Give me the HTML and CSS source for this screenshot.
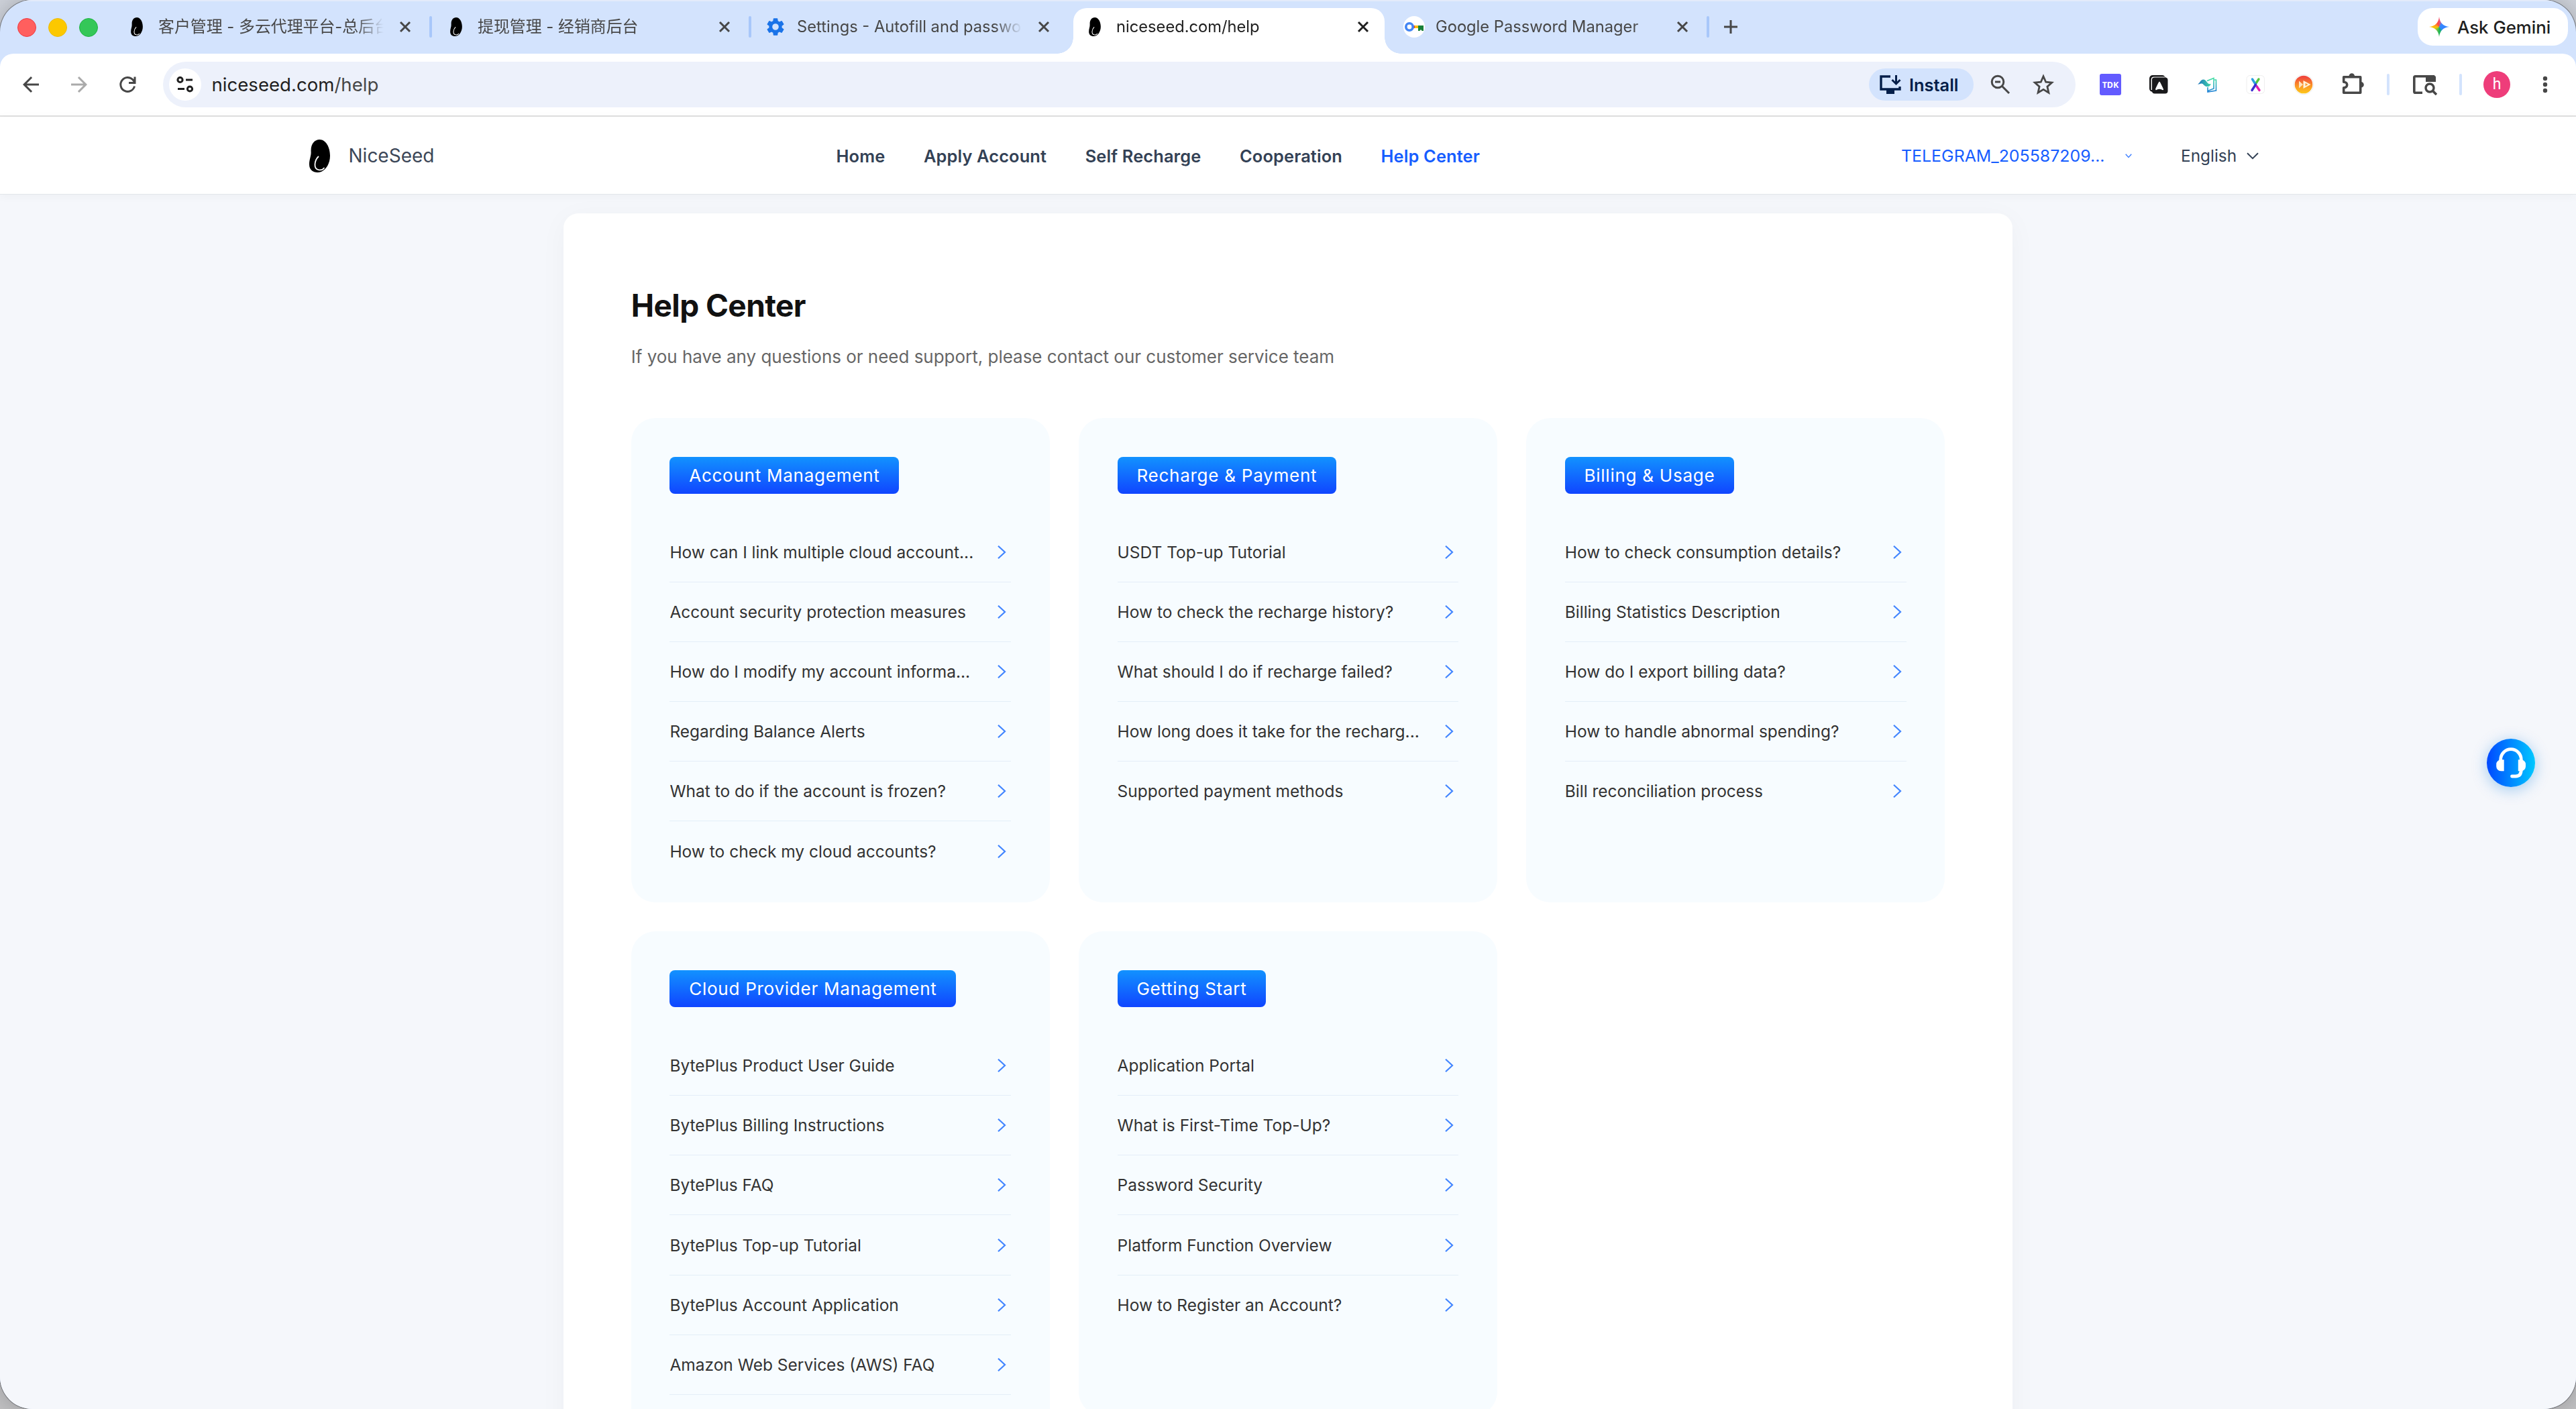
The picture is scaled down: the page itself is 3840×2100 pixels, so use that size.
FILE: index.html
```html
<!DOCTYPE html>
<html lang="en">
<head>
<meta charset="utf-8">
<title>niceseed.com/help</title>
<link rel="stylesheet" href="styles.css">
</head>
<body>
<svg class="defs" aria-hidden="true">
  <symbol id="seed" viewBox="0 0 31 49">
    <path d="M15.500 0C24.500 0 31 11 31 24c0 14-8.500 25-18.500 25C4.500 49 0 44 0 37c0-8 3-12 2.600-19C2 7 7.500 0 15.500 0z"/>
    <path d="M13.500 25.500C8 31 5.500 43.500 14 45.200c3.500.6 6.500-.7 8-2.700" fill="none" stroke="#fff" stroke-width="1.800" stroke-linecap="round"/>
  </symbol>
  <symbol id="close" viewBox="0 0 32 32"><path d="M9 9l14 14M23 9L9 23" fill="none" stroke="currentColor" stroke-width="3"/></symbol>
  <symbol id="chev" viewBox="0 0 26 26"><path d="M7 3.800L17 13 7 22.200" fill="none" stroke="#4285ff" stroke-width="2.200"/></symbol>
</svg>

<div class="window">
  <div class="tabstrip">
    <div class="lights"><i class="red"></i><i class="yellow"></i><i class="green"></i></div>
    <div class="tab sep">
      <span class="fav"><svg class="seed-s"><use href="#seed"/></svg></span>
      <span class="label cjk">客户管理 - 多云代理平台-总后台</span>
      <svg class="x"><use href="#close"/></svg>
    </div>
    <div class="tab sep">
      <span class="fav"><svg class="seed-s"><use href="#seed"/></svg></span>
      <span class="label cjk">提现管理 - 经销商后台</span>
      <svg class="x"><use href="#close"/></svg>
    </div>
    <div class="tab">
      <span class="fav"><svg width="32" height="32" viewBox="0 0 24 24"><path fill="#1a73e8" d="M19.140 12.940c.04-.3.06-.61.06-.94s-.02-.64-.07-.94l2.030-1.580a.49.49 0 0 0 .12-.61l-1.920-3.320a.488.488 0 0 0-.59-.22l-2.390.96c-.5-.38-1.030-.7-1.620-.94L14.400 2.810a.484.484 0 0 0-.48-.41h-3.840c-.24 0-.43.17-.47.41l-.36 2.540c-.59.24-1.130.57-1.620.94l-2.390-.96a.48.48 0 0 0-.59.22L2.740 8.870c-.12.21-.08.47.12.61l2.030 1.580c-.05.3-.09.63-.09.94s.02.64.07.94l-2.030 1.580a.49.49 0 0 0-.12.61l1.920 3.320c.12.22.37.29.59.22l2.390-.96c.5.38 1.030.7 1.620.94l.36 2.540c.05.24.24.41.48.41h3.840c.24 0 .44-.17.47-.41l.36-2.540c.59-.24 1.130-.56 1.620-.94l2.390.96c.22.08.47 0 .59-.22l1.920-3.320a.48.48 0 0 0-.12-.61l-2.010-1.580zM12 15.600a3.600 3.600 0 1 1 0-7.200 3.600 3.600 0 0 1 0 7.200z"/></svg></span>
      <span class="label">Settings - Autofill and passwords</span>
      <svg class="x"><use href="#close"/></svg>
    </div>
    <div class="tab active">
      <span class="fav"><svg class="seed-s"><use href="#seed"/></svg></span>
      <span class="label">niceseed.com/help</span>
      <svg class="x"><use href="#close"/></svg>
    </div>
    <div class="tab sep">
      <span class="fav"><svg width="32" height="32" viewBox="0 0 32 32"><circle cx="16" cy="16" r="16" fill="#fff"/><path d="M15 14h8v4h-8z" fill="#fbbc04"/><path d="M13 14h4v4h-4z" fill="#ea4335"/><path d="M22 14h8v8h-2.300l-1.700-2-1.700 2H22z" fill="#188038"/><circle cx="9" cy="16" r="5.200" fill="none" stroke="#4285f4" stroke-width="3.600"/></svg></span>
      <span class="label">Google Password Manager</span>
      <svg class="x"><use href="#close"/></svg>
    </div>
    <svg class="plus" width="20" height="20" viewBox="0 0 20 20"><path d="M10 0v20M0 10h20" stroke="#474747" stroke-width="3"/></svg>
    <div class="gemini">
      <span class="spark"></span>
      <span>Ask Gemini</span>
    </div>
  </div>

  <div class="toolbar">
    <svg class="nav-i" viewBox="0 0 24 24"><path fill="#474747" d="M20 11H7.830l5.590-5.590L12 4l-8 8 8 8 1.410-1.410L7.830 13H20v-2z"/></svg>
    <svg class="nav-i" viewBox="0 0 24 24"><path fill="#aaa" d="M12 4l-1.410 1.410L16.170 11H4v2h12.170l-5.580 5.590L12 20l8-8-8-8z"/></svg>
    <svg class="nav-i" viewBox="0 0 36 36"><path d="M28.500 20.500A10.500 10.500 0 1 1 26 10.800l2.500 3.400M29 6.500v9h-9" fill="none" stroke="#474747" stroke-width="3"/></svg>
    <div class="address">
      <span class="info"><svg width="26" height="24" viewBox="0 0 26 24"><g fill="none" stroke="#1f1f1f" stroke-width="3"><circle cx="5.500" cy="5" r="3.600"/><path d="M14 5h10"/><path d="M2 18.500h10"/><circle cx="20" cy="18.500" r="3.600"/></g></svg></span>
      <span class="url"><b>niceseed.com</b>/help</span>
      <span class="install">
        <svg width="32" height="28" viewBox="0 0 32 28"><g fill="none" stroke="#041e49" stroke-width="3.400"><path d="M16 2H2v19h28v-4"/><path d="M24.500 0v12M18.500 7l6 6 6-6" stroke-width="3"/></g><path d="M10 21h12v7H10z" fill="#041e49"/></svg>
        <span>Install</span>
      </span>
      <svg class="a-i" viewBox="0 0 32 32"><g fill="none" stroke="#474747" stroke-width="3"><circle cx="12" cy="12" r="8.800"/><path d="M18.500 18.500l10.500 10.500M8 12h8"/></g></svg>
      <svg class="a-i" viewBox="0 0 32 32"><path d="M16 3.800l3.700 8.400 9.100.8-6.900 6.100 2 9L16 23.300l-7.900 4.800 2-9L3.200 13l9.100-.8z" fill="none" stroke="#474747" stroke-width="2.800"/></svg>
    </div>
    <div class="ext">
      <span class="tdk">TDK</span>
      <svg viewBox="0 0 32 32"><rect x="2" y="2" width="24" height="25" rx="5" fill="#19191b"/><path d="M5.300 24V9q0-3.700 3.700-3.700h16" fill="none" stroke="#fff" stroke-width="1.400"/><rect x="6" y="5.500" width="23.500" height="24" rx="4" fill="#19191b"/><path d="M17 11.500c1 0 5.500 10 6 11.500s-1.500 1.500-3 .3c-1.500-.9-4.500-.9-6 0-1.500 1.200-3.500 1.200-3-.3s5-11.500 6-11.500z" fill="#fff"/></svg>
      <svg viewBox="0 0 32 32"><defs><linearGradient id="tl" x1="0" y1="0" x2="0" y2="1"><stop offset="0" stop-color="#45e0a4"/><stop offset="1" stop-color="#1c7fd6"/></linearGradient><linearGradient id="tw" x1="0" x2="1"><stop offset="0" stop-color="#1f72bd"/><stop offset="1" stop-color="#3fd9a8"/></linearGradient></defs><path d="M16 10.500L26 6.500V22l-9 3.500v1.500L29.500 25V9H27M17 25.500V20" fill="none" stroke="url(#tl)" stroke-width="1.600"/><path d="M2 15.500C5.500 14 6 8.500 10.500 8.500c5 0 5 8 11.500 6.500-1.500 3.500-4 4.500-6.500 4-4.500-.8-5-5-8-4.500-2 .4-3 1-5.500 1z" fill="url(#tw)"/></svg>
      <svg viewBox="0 0 32 32"><rect x="3" y="2.500" width="26.500" height="27" rx="5" fill="#fff" stroke="#eee"/><path d="M17 14l4-6" stroke="#55c63c" stroke-width="3.400" stroke-linecap="round"/><path d="M18 18.500l4 6" stroke="#e01fb0" stroke-width="3.400" stroke-linecap="round"/><path d="M11.500 8l5 8" stroke="#2a9fe0" stroke-width="3.400" stroke-linecap="round"/><path d="M16.500 16l-5.500 8.500" stroke="#3a2fd0" stroke-width="3.400" stroke-linecap="round"/></svg>
      <svg viewBox="0 0 32 32"><defs><linearGradient id="og" x1=".5" y1="0" x2=".5" y2="1"><stop offset=".1" stop-color="#f0483c"/><stop offset=".6" stop-color="#fb9a24"/><stop offset="1" stop-color="#fdc71b"/></linearGradient></defs><circle cx="16" cy="16" r="14.800" fill="#fff" stroke="#ececec"/><circle cx="16" cy="16" r="13.300" fill="url(#og)"/><path d="M9 10.500l6 5.500-6 5.500z" fill="#ffe3bd"/><path d="M15.500 10l11 6-11 6z" fill="#fff3dc"/><path d="M18.500 13.800l4 2.200-4 2.200z" fill="#fba03a"/></svg>
      <svg class="puzzle" viewBox="0 0 34 34"><path d="M3.700 7.700h25v23.600h-25v-7.600c3 0 5-1.700 5-4.200s-2-4.200-5-4.200z" fill="none" stroke="#474747" stroke-width="3.600" stroke-linejoin="round"/><path d="M11.500 6.500a4.300 4.300 0 0 1 8.600 0zM29.500 15a4.300 4.300 0 0 1 0 8.600z" fill="#474747"/></svg>
      <i class="bar"></i>
      <svg class="tsearch" viewBox="0 0 36 30"><path d="M14 26.200H3.600q-1.800 0-1.800-1.800V3.600q0-1.800 1.800-1.800h28.600" fill="none" stroke="#474747" stroke-width="3.600"/><path d="M19 1h13q2 0 2 2v7H19z" fill="#474747"/><circle cx="25" cy="19" r="6" fill="none" stroke="#474747" stroke-width="3.400"/><path d="M29 23l6 6" stroke="#474747" stroke-width="3.600"/></svg>
      <i class="bar"></i>
      <span class="avatar">h</span>
      <svg class="dots" viewBox="0 0 8 26"><g fill="#474747"><circle cx="4" cy="4" r="3.200"/><circle cx="4" cy="13" r="3.200"/><circle cx="4" cy="22" r="3.200"/></g></svg>
    </div>
  </div>

  <header class="site">
    <div class="brand"><svg width="31" height="49"><use href="#seed"/></svg><span>NiceSeed</span></div>
    <nav><a>Home</a><a>Apply Account</a><a>Self Recharge</a><a>Cooperation</a><a class="on">Help Center</a></nav>
    <div class="right">
      <span class="user"><span>TELEGRAM_205587209...</span><svg width="10" height="7" viewBox="0 0 10 7"><path d="M.7.800L5 5.500 9.300.8" fill="none" stroke="#4080ff" stroke-width="1.400"/></svg></span>
      <span class="lang"><span>English</span><svg width="18" height="11" viewBox="0 0 18 11"><path d="M1 1.200l8 8 8-8" fill="none" stroke="#334155" stroke-width="2"/></svg></span>
    </div>
  </header>

  <main>
    <section class="panel">
      <h1>Help Center</h1>
      <p class="sub">If you have any questions or need support, please contact our customer service team</p>
      <div class="grid">
        <div class="card">
          <h2>Account Management</h2>
          <ul>
            <li>How can I link multiple cloud account...<svg><use href="#chev"/></svg></li>
            <li>Account security protection measures<svg><use href="#chev"/></svg></li>
            <li>How do I modify my account informa...<svg><use href="#chev"/></svg></li>
            <li>Regarding Balance Alerts<svg><use href="#chev"/></svg></li>
            <li>What to do if the account is frozen?<svg><use href="#chev"/></svg></li>
            <li>How to check my cloud accounts?<svg><use href="#chev"/></svg></li>
          </ul>
        </div>
        <div class="card">
          <h2>Recharge &amp; Payment</h2>
          <ul>
            <li>USDT Top-up Tutorial<svg><use href="#chev"/></svg></li>
            <li>How to check the recharge history?<svg><use href="#chev"/></svg></li>
            <li>What should I do if recharge failed?<svg><use href="#chev"/></svg></li>
            <li>How long does it take for the recharg...<svg><use href="#chev"/></svg></li>
            <li>Supported payment methods<svg><use href="#chev"/></svg></li>
          </ul>
        </div>
        <div class="card">
          <h2>Billing &amp; Usage</h2>
          <ul>
            <li>How to check consumption details?<svg><use href="#chev"/></svg></li>
            <li>Billing Statistics Description<svg><use href="#chev"/></svg></li>
            <li>How do I export billing data?<svg><use href="#chev"/></svg></li>
            <li>How to handle abnormal spending?<svg><use href="#chev"/></svg></li>
            <li>Bill reconciliation process<svg><use href="#chev"/></svg></li>
          </ul>
        </div>
        <div class="card more">
          <h2>Cloud Provider Management</h2>
          <ul>
            <li>BytePlus Product User Guide<svg><use href="#chev"/></svg></li>
            <li>BytePlus Billing Instructions<svg><use href="#chev"/></svg></li>
            <li>BytePlus FAQ<svg><use href="#chev"/></svg></li>
            <li>BytePlus Top-up Tutorial<svg><use href="#chev"/></svg></li>
            <li>BytePlus Account Application<svg><use href="#chev"/></svg></li>
            <li>Amazon Web Services (AWS) FAQ<svg><use href="#chev"/></svg></li>
          </ul>
        </div>
        <div class="card">
          <h2>Getting Start</h2>
          <ul>
            <li>Application Portal<svg><use href="#chev"/></svg></li>
            <li>What is First-Time Top-Up?<svg><use href="#chev"/></svg></li>
            <li>Password Security<svg><use href="#chev"/></svg></li>
            <li>Platform Function Overview<svg><use href="#chev"/></svg></li>
            <li>How to Register an Account?<svg><use href="#chev"/></svg></li>
          </ul>
        </div>
      </div>
    </section>
  </main>

  <div class="fab">
    <svg width="72" height="72" viewBox="0 0 72 72"><g fill="none" stroke="#fff" stroke-width="4.800"><path d="M20.700 34V31a15.300 15.300 0 0 1 30.600 0v3"/><path d="M51.300 46c0 7-3.300 10-8.300 10h-5.500" stroke-linecap="round"/></g><path d="M25.700 31.300v17h-4.500a7 7 0 0 1-7-7v-3a7 7 0 0 1 7-7zM46.800 31.300v17h4.200a7 7 0 0 0 7-7v-3a7 7 0 0 0-7-7z" fill="#fff"/></svg>
  </div>
</div>
</body>
</html>
```
FILE: styles.css
```css
* { box-sizing: border-box; }
html, body { margin: 0; padding: 0; }
body {
  width: 3840px;
  height: 2100px;
  overflow: hidden;
  background: linear-gradient(#cdd1d9, #bfbfc1);
  font-family: Inter, "Noto Sans CJK SC", sans-serif;
  color: #333;
}
.defs { position: absolute; width: 0; height: 0; }
svg { display: block; flex: none; }
i { display: block; }

.window {
  position: relative;
  display: flex;
  flex-direction: column;
  width: 3840px;
  height: 2100px;
  border-radius: 48px;
  overflow: hidden;
  background: #d3e3fd;
  box-shadow: 0 0 0 1px rgba(0, 0, 0, .35), 0 0 30px rgba(0, 0, 0, .2);
}

/* Tab strip */
.tabstrip {
  display: flex;
  align-items: center;
  height: 80px;
  flex: none;
  box-shadow: inset 0 2px 0 #e3ebfa;
}
.lights { display: flex; gap: 18px; width: 166px; padding: 2px 0 0 26px; }
.lights i { width: 28px; height: 28px; border-radius: 50%; border: 1px solid; }
.lights .red { background: #ff5f5e; border-color: #ee3a42; }
.lights .yellow { background: #fcc800; border-color: #eebb00; }
.lights .green { background: #34c758; border-color: #1fb443; }
.tab {
  position: relative;
  display: flex;
  align-items: center;
  gap: 16px;
  width: 476px;
  height: 80px;
  padding: 0 22px;
  font-size: 23.7px;
  color: #474747;
}
.tab.sep::after {
  content: "";
  position: absolute;
  right: -2px;
  top: 24px;
  width: 4px;
  height: 32px;
  border-radius: 2px;
  background: #a8c7fa;
}
.fav { display: flex; justify-content: center; width: 32px; flex: none; }
.seed-s { width: 18px; height: 28px; }
.label {
  width: 336px;
  overflow: hidden;
  white-space: nowrap;
  line-height: 40px;
  -webkit-mask-image: linear-gradient(90deg, #000 294px, transparent 336px);
  mask-image: linear-gradient(90deg, #000 294px, transparent 336px);
}
.label.cjk { font-size: 23.9px; }
.tab .x { width: 32px; height: 32px; }
.tab.active {
  width: 464px;
  height: 68px;
  margin: 12px 6px 0;
  padding: 0 16px 12px;
  border-radius: 20px 20px 0 0;
  background: #fff;
  color: #1f1f1f;
}
.tab.active::before, .tab.active::after {
  content: "";
  position: absolute;
  bottom: 0;
  width: 24px;
  height: 24px;
}
.tab.active::before { left: -24px; background: radial-gradient(circle at 0 0, transparent 23.5px, #fff 24px); }
.tab.active::after { right: -24px; background: radial-gradient(circle at 100% 0, transparent 23.5px, #fff 24px); }
.plus { margin-left: 24px; }
.gemini {
  display: flex;
  align-items: center;
  gap: 12px;
  width: 224px;
  height: 56px;
  margin-left: auto;
  margin-right: 12px;
  padding-left: 17px;
  border-radius: 22px;
  background: #fff;
  color: #1f1f1f;
  font-size: 25.8px;
  font-weight: 500;
  white-space: nowrap;
}
.spark {
  width: 30px;
  height: 30px;
  background: conic-gradient(from -20deg, #ff4641 0deg, #f0506e 25deg, #3a86ff 60deg, #2f86ff 150deg, #14b45a 190deg, #5fbe4a 225deg, #ffc400 285deg, #ff8a2a 320deg, #ff4641 360deg);
  clip-path: path("M15 0c1 9 6 14 15 15-9 1-14 6-15 15-1-9-6-14-15-15 9-1 14-6 15-15z");
}

/* Toolbar */
.toolbar {
  display: flex;
  align-items: center;
  height: 94px;
  flex: none;
  padding: 0 0 0 28px;
  border-bottom: 2px solid #e0e0e0;
  border-radius: 20px 20px 0 0;
  background: #fff;
}
.nav-i { width: 36px; height: 36px; margin-right: 36px; }
.nav-i + .nav-i + .nav-i { margin-right: 35px; }
.address {
  display: flex;
  align-items: center;
  width: 2851px;
  height: 68px;
  flex: none;
  padding: 0 32px 0 9px;
  border-radius: 34px;
  background: #edf1fb;
}
.info {
  display: flex;
  align-items: center;
  justify-content: center;
  width: 48px;
  height: 48px;
  border-radius: 50%;
  background: #fff;
}
.url { margin-left: 15.5px; font-size: 27.6px; color: #474747; }
.url b { font-weight: 400; color: #1f1f1f; }
.install {
  display: flex;
  align-items: center;
  gap: 12px;
  width: 156px;
  height: 48px;
  margin-left: auto;
  padding-left: 16px;
  border-radius: 24px;
  background: #d3e3fd;
  color: #041e49;
  font-size: 25.4px;
  font-weight: 600;
}
.a-i { width: 32px; height: 32px; margin-left: 24px; }
.a-i + .a-i { margin-left: 32px; }
.ext { display: flex; align-items: center; gap: 40px; margin-left: 36px; }
.ext > svg { width: 32px; height: 32px; }
.tdk {
  width: 32px;
  height: 32px;
  border-radius: 3px;
  background: #635bff;
  color: #fff;
  font: 700 12.5px/33px "Noto Sans", sans-serif;
  text-align: center;
}
.ext .puzzle { width: 34px; height: 34px; margin: -4px 0 0; }
.bar { width: 4px; height: 32px; border-radius: 2px; background: #d3e3fd; margin-left: -6px; }
.ext .tsearch { width: 36px; height: 30px; margin-left: -5px; margin-top: 2px; }
.tsearch + .bar { margin-left: -7px; }
.avatar {
  width: 40px;
  height: 40px;
  margin-left: -8px;
  border-radius: 50%;
  background: #ee3d7a;
  color: #fff;
  font: 400 23px/39px Roboto, sans-serif;
  text-align: center;
}
.ext .dots { width: 8px; height: 26px; margin-left: 8px; }

/* Site header */
.site {
  position: relative;
  display: flex;
  align-items: center;
  height: 116px;
  flex: none;
  padding: 1px 473px 0 461px;
  border-bottom: 1px solid #e2e6ea;
  background: #fff;
  box-shadow: 0 2px 14px rgba(0, 0, 0, .04);
  color: #334155;
  white-space: nowrap;
}
.brand { display: flex; align-items: center; gap: 27.5px; width: 785.5px; font-size: 28px; color: #3b4657; }
nav { display: flex; gap: 57.6px; font-size: 25.4px; font-weight: 600; letter-spacing: .13px; }
nav .on { color: #165dff; }
.right { display: flex; align-items: center; margin-left: auto; }
.user { display: flex; align-items: center; gap: 30px; width: 417px; font-size: 24.9px; color: #165dff; }
.lang { display: flex; align-items: center; justify-content: space-between; width: 116px; font-size: 24.4px; }

/* Help page */
main { flex: 1; min-height: 0; padding: 28px 840px 0; background: #f5f7fb; }
.panel {
  height: 2200px;
  padding: 101px 100px 0 100.8px;
  border-radius: 22px;
  background: #fff;
  box-shadow: 0 7px 43px rgba(0, 0, 0, .035);
}
h1 { margin: 0 0 20px; font-size: 46px; line-height: 72px; font-weight: 700; letter-spacing: -.6px; color: #111; }
.sub { margin: 0 0 71px; font-size: 26px; line-height: 41px; letter-spacing: -.02px; color: #666; }
.grid { display: grid; grid-template-columns: repeat(3, 624px); grid-auto-rows: 722px; gap: 43.2px; }
.card { padding: 58px 57.6px 0; border-radius: 36px; background: #f7fcff; }
.card.more { height: 900px; }
h2 {
  width: max-content;
  height: 55px;
  margin: 0 0 43px;
  padding: 0 28.8px;
  border-radius: 8px;
  background: linear-gradient(#1292ff, #1045ff);
  color: #fff;
  font-size: 26.1px;
  line-height: 55px;
  font-weight: 400;
  letter-spacing: .7px;
}
ul { margin: 0; padding: 0; list-style: none; }
li {
  display: flex;
  align-items: center;
  justify-content: space-between;
  height: 89.1px;
  border-bottom: 1px solid #e4eef8;
  font-size: 24.5px;
  white-space: nowrap;
}
li:last-child { border-bottom-color: transparent; }
.more li:last-child { border-bottom-color: #e4eef8; }
li svg { width: 26px; height: 26px; }

.fab {
  position: absolute;
  left: 3707px;
  top: 1101px;
  width: 72px;
  height: 72px;
  border-radius: 50%;
  background: linear-gradient(90deg, #0048ff, #00c8ff);
  box-shadow: 0 4px 22px rgba(0, 120, 220, .35);
}
```
